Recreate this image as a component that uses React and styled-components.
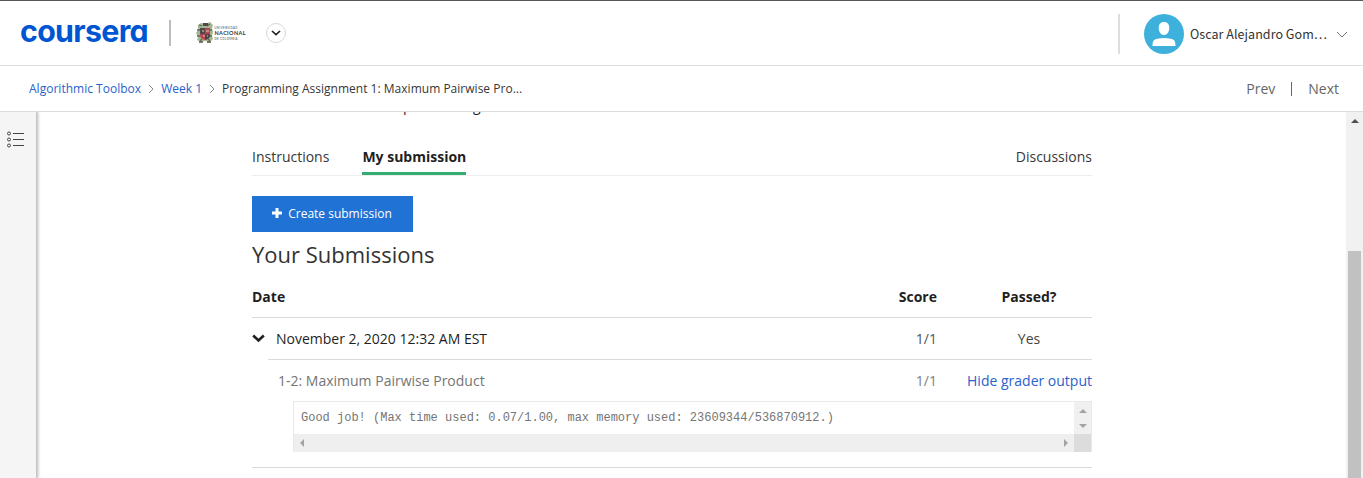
import React from 'react';
import styled, { createGlobalStyle } from 'styled-components';

const GlobalStyle = createGlobalStyle`
  * { box-sizing: border-box; }
  html, body { margin: 0; padding: 0; overflow: hidden; background: #fff; }
  body { font-family: 'Open Sans', 'Noto Sans', sans-serif; font-size: 14px; color: #1f1f1f; }
`;

const Page = styled.div`
  display: flex;
  flex-direction: column;
  width: 1363px;
  height: 478px;
  overflow: hidden;
  border-top: 1px solid #57555a;
  background: #fff;
`;

const Header = styled.header`
  display: flex;
  align-items: center;
  justify-content: space-between;
  flex: none;
  height: 65px;
  border-bottom: 1px solid #dedede;
  padding: 0 15px 0 20px;
`;

const Brand = styled.div`
  display: flex;
  align-items: center;
`;

const Logo = styled.svg`
  margin-right: 20px;
  overflow: visible;
`;

const Divider = styled.span`
  width: 2px;
  height: ${(p) => p.$height}px;
  background: ${(p) => p.$color};
`;

const PartnerLogo = styled.svg`
  margin-left: 24px;
`;

const RoundButton = styled.button`
  display: flex;
  align-items: center;
  justify-content: center;
  width: 20px;
  height: 20px;
  margin-left: 20px;
  padding: 0;
  border: 1px solid #d9d9d9;
  border-radius: 50%;
  background: #fff;
`;

const Account = styled.div`
  display: flex;
  align-items: center;
  padding-top: 2px;
`;

const Avatar = styled.svg`
  margin-left: 24px;
`;

const UserName = styled.span`
  width: 138px;
  margin: 0 8px 0 6px;
  font-family: 'Noto Sans CJK SC', 'Noto Sans', sans-serif;
  font-size: 12.5px;
  line-height: 20px;
  letter-spacing: 0.05px;
  white-space: nowrap;
  color: #333;
`;

const SubHeader = styled.div`
  display: flex;
  align-items: center;
  justify-content: space-between;
  flex: none;
  height: 46px;
  padding: 0 24px 0 29px;
  border-bottom: 1px solid #dbdbdb;
`;

const Crumbs = styled.nav`
  display: flex;
  align-items: center;
  font-size: 12px;
  letter-spacing: 0.015px;
  white-space: nowrap;
`;

const Crumb = styled.span`
  color: ${(p) => (p.$link ? '#2a62cd' : '#373737')};
`;

const CrumbArrow = styled.svg`
  margin: 0 7px;
`;

const Pager = styled.div`
  display: flex;
  align-items: center;
  gap: 16px;
  color: #666;
  line-height: 20px;
`;

const PagerLine = styled.span`
  width: 1px;
  height: 14px;
  background: #666;
`;

const Body = styled.div`
  display: flex;
  flex: 1;
  min-height: 0;
`;

const Sidebar = styled.aside`
  flex: none;
  width: 36px;
  padding: 19px 0 0 7px;
  background: #f5f5f5;
  box-shadow: 1px 0 3px 1px rgba(0, 0, 0, 0.28);
  clip-path: inset(0 -6px 0 0);
`;

const Content = styled.main`
  flex: none;
  width: 840px;
  margin-left: 216px;
  overflow: hidden;
`;

const ScrolledLine = styled.div`
  height: 20px;
  line-height: 20px;
  margin-top: -16px;
  padding-left: 151px;
`;

const Tabs = styled.div`
  display: flex;
  align-items: flex-start;
  height: 29px;
  margin-top: 31px;
  border-bottom: 1px solid #ededed;
`;

const Tab = styled.span`
  height: 28px;
  line-height: 20px;
  margin-left: ${(p) => (p.$last ? 'auto' : p.$active ? '33px' : 0)};
  font-weight: ${(p) => (p.$active ? 700 : 400)};
  border-bottom: ${(p) => (p.$active ? '3px solid #35ac6f' : 'none')};
  color: ${(p) => (p.$active ? '#1f1f1f' : '#373737')};
`;

const CreateButton = styled.button`
  display: flex;
  align-items: center;
  justify-content: center;
  gap: 6px;
  width: 161px;
  height: 36px;
  margin: 20px 0 0;
  padding: 0 1px 2px 0;
  border: 0;
  background: #2073d5;
  color: #fff;
  font: 12px 'Open Sans', sans-serif;
`;

const Heading = styled.h2`
  margin: 7px 0 0;
  font-size: 22px;
  font-weight: 400;
  line-height: 30px;
  color: #333;
`;

const Row = styled.div`
  display: grid;
  grid-template-columns: 1fr 74px 126px;
  align-items: center;
  height: ${(p) => (p.$head ? 49 : 41)}px;
  padding-top: ${(p) => (p.$head ? 7 : 0)}px;
  border-bottom: ${(p) => (p.$head ? '1px solid #dadada' : 'none')};
  font-weight: ${(p) => (p.$head ? 700 : 400)};
  white-space: nowrap;
`;

const DetailRow = styled(Row)`
  height: 42px;
  margin-left: 16px;
  border-top: 1px solid #dadada;
  color: #757575;
`;

const DateCell = styled.div`
  display: flex;
  align-items: center;
  gap: 11px;
  padding-left: ${(p) => p.$pad || 0}px;
`;

const ScoreCell = styled.div`
  padding-right: 29px;
  text-align: right;
  color: ${(p) => (p.$head ? 'inherit' : p.$dim ? '#808080' : '#555')};
`;

const PassedCell = styled.div`
  text-align: center;
  color: ${(p) => (p.$soft ? '#444' : 'inherit')};
`;

const OutputLink = styled.a`
  text-align: right;
  color: #2a62cd;
`;

const Output = styled.div`
  display: grid;
  grid-template-columns: 1fr 17px;
  grid-template-rows: 32px 18px;
  width: 799px;
  height: 51px;
  margin-left: 41px;
  border: 1px solid #e9e9e9;
  border-bottom: 0;
`;

const OutputText = styled.code`
  padding: 1px 0 0 7px;
  font-family: 'Liberation Mono', monospace;
  font-size: 12px;
  line-height: 31px;
  white-space: pre;
  color: #757575;
`;

const VerticalBar = styled.div`
  display: flex;
  flex-direction: column;
  align-items: center;
  justify-content: space-between;
  padding: 7px 0 6px;
  background: #f0f0f0;
`;

const HorizontalBar = styled.div`
  display: flex;
  align-items: center;
  justify-content: space-between;
  padding: 0 6px 1px;
  background: #efefef;
`;

const Corner = styled.div`
  background: #dcdcdc;
`;

const EndLine = styled.div`
  height: 1px;
  margin-top: 15px;
  background: #dadada;
`;

const PageScrollbar = styled.div`
  display: flex;
  flex-direction: column;
  align-items: center;
  flex: none;
  width: 17px;
  margin-left: auto;
  padding-top: 7px;
  background: #f1f1f1;
`;

const Thumb = styled.div`
  flex: 1;
  width: 13px;
  margin-top: 128px;
  background: #c1c1c1;
`;

function Wordmark() {
  return (
    <Logo width="129" height="38" viewBox="0 0 129 38">
      <text
        x="0" y="28" textLength="128" lengthAdjust="spacingAndGlyphs"
        fontFamily="Inter, Lato, sans-serif" fontWeight="700" fontSize="31" letterSpacing="-0.700" fill="#0056d2"
        style={{ fontFeatureSettings: "'cv11' 1, 'ss03' 1" }}
      >coursera</text>
    </Logo>
  );
}

function Partner() {
  return (
    <PartnerLogo width="51" height="24" viewBox="0 0 51 24">
      <path d="M3 4 6 2l4 1 5-2 3 3-1 3 1 4-1 4 1 3-3 3-5-1-4 1-4-2 1-3-2-4 2-3z" fill="#a4b59a" />
      <path d="M4 4l3 1M15 3l-3 2M2 9h3M17 9h-3M2 15h3M17 15h-3M5 20l2-2M15 20l-2-2" stroke="#56704f" strokeWidth="1.300" />
      <path d="M5 7h10v7c0 3-2 4-5 5-3-1-5-2-5-5z" fill="#b8444c" />
      <path d="M5 7h5v6H5z" fill="#51484b" />
      <path d="M10 13h5v2c0 2-2 3-5 4z" fill="#50434a" />
      <path d="M8 2h5v3H8z" fill="#4d4b42" />
      <path d="M7 10h2M11 10h3M8 15h2M12 15h1" stroke="#dbc8bd" strokeWidth="1.200" />
      <path d="M4 21h4M12 21h4" stroke="#5d5042" strokeWidth="1.500" />
      <g fontFamily="Lato, sans-serif" fill="#333">
        <text x="19.500" y="8" fontSize="2.800" textLength="23" fontWeight="400" fill="#444">UNIVERSIDAD</text>
        <text x="19.500" y="14.300" fontSize="5.500" textLength="31" fontWeight="700">NACIONAL</text>
        <text x="19.500" y="18.500" fontSize="2.800" textLength="23" fontWeight="400" fill="#444">DE COLOMBIA</text>
      </g>
    </PartnerLogo>
  );
}

function Triangle({ dir, color = '#a3a3a3' }) {
  const shapes = { up: 'M0 4 4 0l4 4z', down: 'M0 0h8L4 4z', left: 'M4 0v8L0 4z', right: 'M0 0v8l4-4z' };
  const tall = dir === 'left' || dir === 'right';
  return (
    <svg width={tall ? 4 : 8} height={tall ? 8 : 4}>
      <path d={shapes[dir]} fill={color} />
    </svg>
  );
}

function Separator() {
  return (
    <CrumbArrow width="6" height="10" viewBox="0 0 6 10">
      <path d="M1 1l4 4-4 4" fill="none" stroke="#8c8c8c" />
    </CrumbArrow>
  );
}

export default function App() {
  return (
    <Page>
      <GlobalStyle />
      <Header>
        <Brand>
          <Wordmark />
          <Divider $height={26} $color="#bdbdbd" />
          <Partner />
          <RoundButton aria-label="Switch program">
            <svg width="10" height="6" viewBox="0 0 10 6">
              <path d="M1 1l4 3.7L9 1" fill="none" stroke="#222" strokeWidth="1.700" />
            </svg>
          </RoundButton>
        </Brand>
        <Account>
          <Divider $height={40} $color="#dedede" />
          <Avatar width="40" height="40" viewBox="0 0 40 40">
            <circle cx="20" cy="20" r="20" fill="#3eb0dc" />
            <path d="M20 8c3.600 0 5.300 2.400 5.300 6s-2 7-5.300 7-5.300-3.400-5.300-7 1.700-6 5.300-6zM8.500 32c0-5 1-6.500 5-7.300 4-.9 9-.9 13 0 4 .8 5 2.300 5 7.300z" fill="#fff" />
          </Avatar>
          <UserName>Oscar Alejandro Gom…</UserName>
          <svg width="12" height="7" viewBox="0 0 12 7">
            <path d="M1 1l5 5 5-5" fill="none" stroke="#777" />
          </svg>
        </Account>
      </Header>
      <SubHeader>
        <Crumbs>
          <Crumb $link>Algorithmic Toolbox</Crumb>
          <Separator />
          <Crumb $link>Week 1</Crumb>
          <Separator />
          <Crumb>Programming Assignment 1: Maximum Pairwise Pro...</Crumb>
        </Crumbs>
        <Pager>
          <span>Prev</span>
          <PagerLine />
          <span>Next</span>
        </Pager>
      </SubHeader>
      <Body>
        <Sidebar>
          <svg width="18" height="18" viewBox="0 0 18 18" fill="none" stroke="#444">
            <circle cx="2" cy="2.500" r="1.500" />
            <circle cx="2" cy="8.500" r="1.500" />
            <circle cx="2" cy="14.500" r="1.500" />
            <path d="M6 2.500h11M6 8.500h11M6 14.500h11" />
          </svg>
        </Sidebar>
        <Content>
          <ScrolledLine>pass testing</ScrolledLine>
          <Tabs>
            <Tab>Instructions</Tab>
            <Tab $active>My submission</Tab>
            <Tab $last>Discussions</Tab>
          </Tabs>
          <CreateButton>
            <svg width="10" height="10"><path d="M5 0v10M0 5h10" stroke="#fff" strokeWidth="3" /></svg>
            Create submission
          </CreateButton>
          <Heading>Your Submissions</Heading>
          <Row $head>
            <DateCell>Date</DateCell>
            <ScoreCell $head>Score</ScoreCell>
            <PassedCell>Passed?</PassedCell>
          </Row>
          <Row>
            <DateCell>
              <svg width="13" height="9" viewBox="0 0 13 9">
                <path d="M1.200 1.500l5.300 5 5.300-5" fill="none" stroke="#1f1f1f" strokeWidth="2.600" />
              </svg>
              November 2, 2020 12:32 AM EST
            </DateCell>
            <ScoreCell>1/1</ScoreCell>
            <PassedCell $soft>Yes</PassedCell>
          </Row>
          <DetailRow>
            <DateCell $pad={10}>1-2: Maximum Pairwise Product</DateCell>
            <ScoreCell $dim>1/1</ScoreCell>
            <OutputLink>Hide grader output</OutputLink>
          </DetailRow>
          <Output>
            <OutputText>Good job! (Max time used: 0.07/1.00, max memory used: 23609344/536870912.)</OutputText>
            <VerticalBar><Triangle dir="up" /><Triangle dir="down" /></VerticalBar>
            <HorizontalBar><Triangle dir="left" /><Triangle dir="right" /></HorizontalBar>
            <Corner />
          </Output>
          <EndLine />
        </Content>
        <PageScrollbar>
          <Triangle dir="up" color="#505050" />
          <Thumb />
        </PageScrollbar>
      </Body>
    </Page>
  );
}
